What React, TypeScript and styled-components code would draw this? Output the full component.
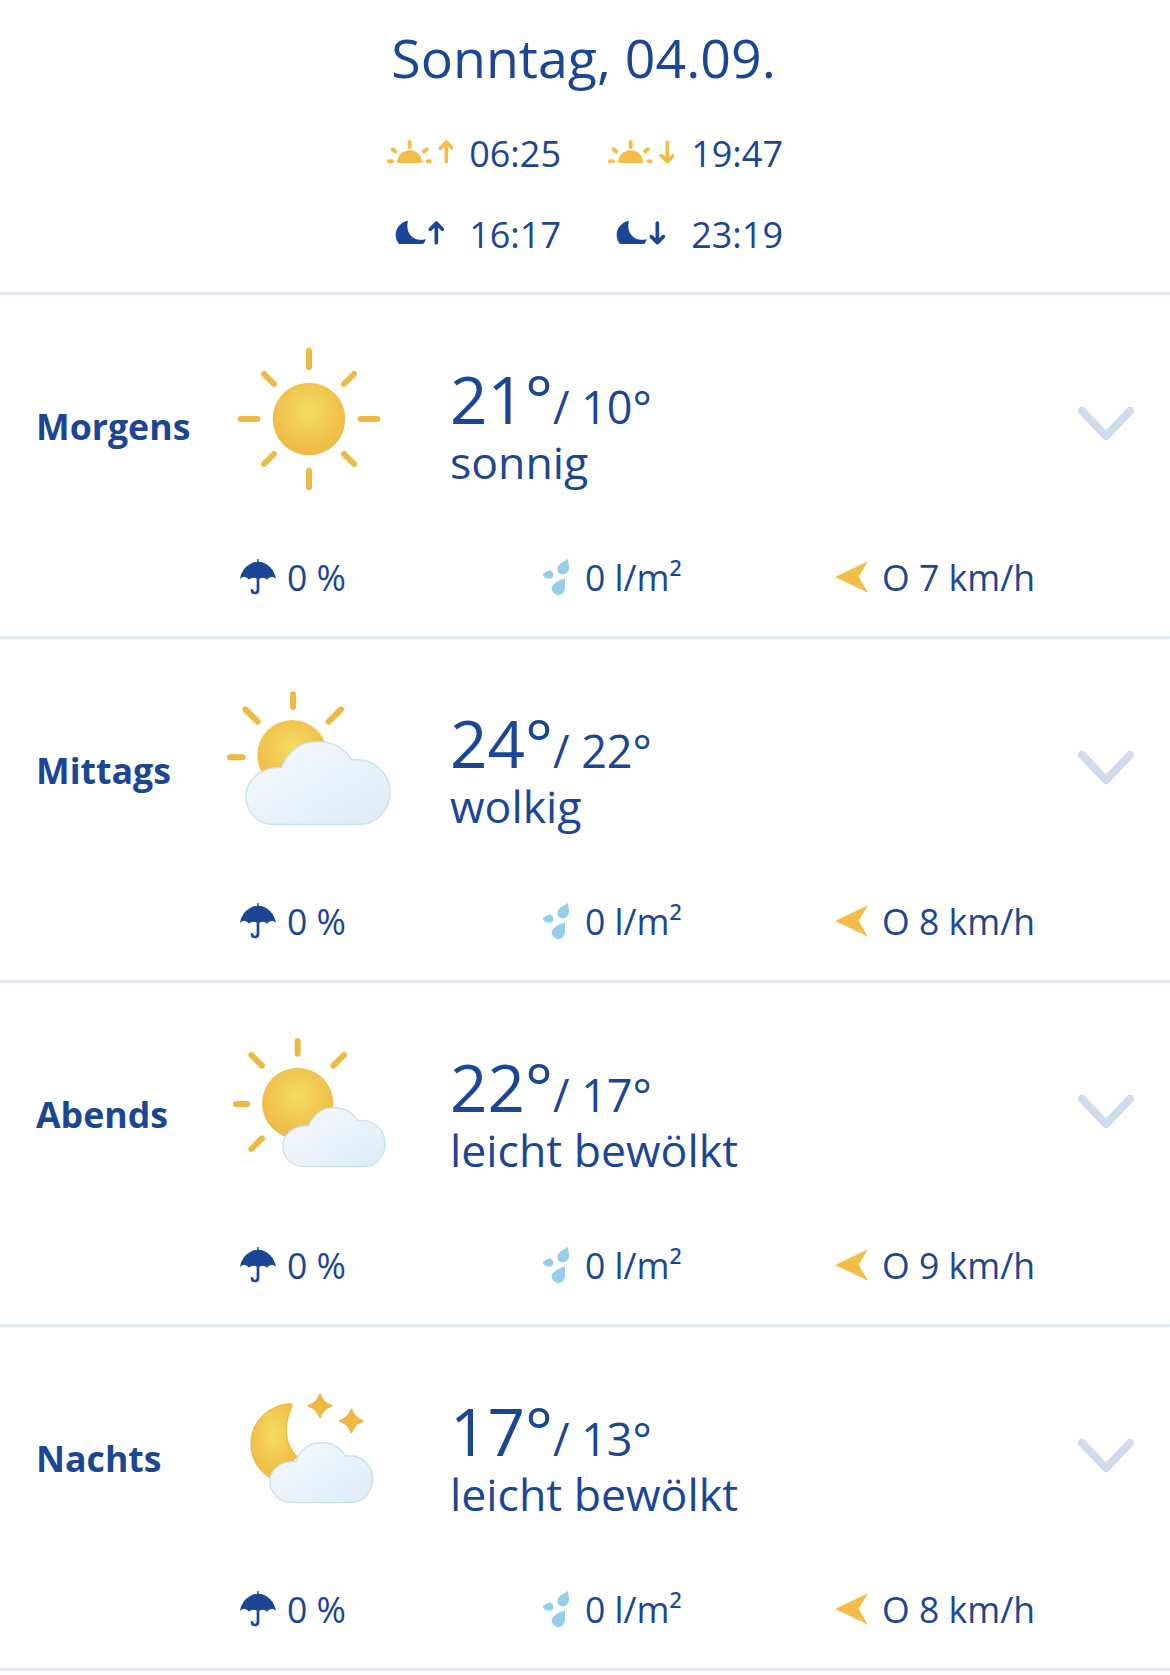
import React from "react";
import styled, { createGlobalStyle } from "styled-components";

const Global = createGlobalStyle`
  html, body { margin: 0; padding: 0; background: #fff; }
  body { font-family: "Open Sans", "Noto Sans", sans-serif; color: #1b4695; }
`;

const Page = styled.div`
  width: 1170px;
  background: #fff;
`;

const Header = styled.header`
  padding-top: 24px;
  display: flex;
  flex-direction: column;
  align-items: center;
  border-bottom: 3px solid #dfe9f6;
  height: 268px;
`;

const Title = styled.h1`
  margin: 0;
  padding-right: 3px;
  font-size: 53.7px;
  font-weight: 400;
  line-height: 68px;
  height: 68px;
`;

const AstroGrid = styled.div`
  display: grid;
  grid-template-columns: 174px 175px;
  column-gap: 47px;
  grid-auto-rows: 81px;
  margin-top: 21px;
`;

const AstroCell = styled.div`
  display: flex;
  align-items: center;
  justify-content: space-between;
  font-size: 36px;
`;

const AstroIcon = styled.svg`
  width: 66px;
  height: 40px;
  display: block;
`;

const Row = styled.section`
  height: 341px;
  border-bottom: 3px solid #dfe9f6;
  display: flex;
  flex-direction: column;
`;

const Main = styled.div`
  display: grid;
  grid-template-columns: 174px 240px 1fr 93px;
  height: 180px;
  padding: 31px 0 0 36px;
`;

const Label = styled.div`
  font-size: 35.7px;
  font-weight: 700;
  line-height: 48px;
  padding-top: 76px;
`;

const WeatherIcon = styled.svg`
  width: 200px;
  height: 180px;
  display: block;
`;

const TempBlock = styled.div`
  padding-top: 38px;
`;

const TempLine = styled.div`
  display: flex;
  align-items: baseline;
  height: 70px;
`;

const High = styled.span`
  font-size: 65.5px;
  line-height: 70px;
`;

const Low = styled.span`
  font-size: 45px;
  line-height: 50px;
`;

const Condition = styled.div`
  font-size: 44.6px;
  line-height: 50px;
  margin-top: 3px;
`;

const Chevron = styled.svg`
  width: 58px;
  height: 35px;
  display: block;
  margin-top: 80px;
`;

const Stats = styled.div`
  display: grid;
  grid-template-columns: 303px 292px auto;
  padding: 47px 0 0 240px;
`;

const Stat = styled.div<{ $gap: number }>`
  display: flex;
  align-items: center;
  gap: ${(p) => p.$gap}px;
  font-size: 35.6px;
  line-height: 48px;
`;

const sunRays = "M68 24V39M6 82H15M122 82H128M17 46L25 52M119 46L111 52";

const AstroGlyph = ({ moon, down }: { moon?: boolean; down?: boolean }) => {
  const color = moon ? "#1b4695" : "#f3bd4a";
  const x = moon ? 148 : 178;
  const arrow = down
    ? `M${x} 24V82M${x - 18} 65L${x} 83L${x + 18} 65`
    : `M${x} 83V24M${x - 18} 43L${x} 24L${x + 18} 43`;
  return (
    <AstroIcon viewBox="0 0 198 120">
      {moon ? (
        <path fill={color} d="M63 17C38 22 26 42 26 60C26 71 30 80 36 87L108 87C112 83 115 78 116 72C90 82 52 62 63 17Z" />
      ) : (
        <>
          <path fill={color} d="M30 87A38 38 0 0 1 106 87Z" />
          <path stroke={color} strokeWidth={12} strokeLinecap="round" fill="none" d={sunRays} />
        </>
      )}
      <path stroke={color} strokeWidth={11} strokeLinecap="round" strokeLinejoin="round" fill="none" d={arrow} />
    </AstroIcon>
  );
};

const Defs = ({ id }: { id: string }) => (
  <defs>
    <radialGradient id={`sun${id}`} cx="50%" cy="40%" r="60%">
      <stop offset="0%" stopColor="#f3dc62" />
      <stop offset="100%" stopColor="#efb945" />
    </radialGradient>
    <linearGradient id={`cloud${id}`} x1="0" y1="0" x2="1" y2="1">
      <stop offset="0%" stopColor="#f6f9fd" />
      <stop offset="100%" stopColor="#ddecf7" />
    </linearGradient>
  </defs>
);

const Rays = ({ d }: { d: string }) => (
  <path d={d} stroke="#efb945" strokeWidth={18} strokeLinecap="round" fill="none" />
);

const CloudPath = ({ id, d }: { id: string; d: string }) => (
  <path d={d} fill={`url(#cloud${id})`} stroke="#c6e0ee" strokeWidth={4} />
);

const SunIcon = () => (
  <WeatherIcon viewBox="0 0 600 540">
    <Defs id="a" />
    <Rays d="M297 74V124M297 434V484M92 279H142M452 279H502M162 144L192 174M432 144L402 174M162 414L192 384M432 414L402 384" />
    <circle cx="297" cy="279" r="109" fill="url(#suna)" />
  </WeatherIcon>
);

const CloudyIcon = () => (
  <WeatherIcon viewBox="0 0 600 540">
    <Defs id="b" />
    <Rays d="M249 73V111M60 262H98M106 118L143 155M393 118L356 155" />
    <circle cx="247" cy="255" r="105" fill="url(#sunb)" />
    <CloudPath id="b" d="M190 463C140 463 108 425 108 378C108 330 150 292 215 292C235 240 275 215 320 215C370 215 405 235 425 270C490 262 540 310 540 365C540 420 500 463 450 463Z" />
  </WeatherIcon>
);

const PartlyIcon = () => (
  <WeatherIcon viewBox="0 0 600 540">
    <Defs id="c" />
    <Rays d="M263 81V119M78 270H112M124 123L156 155M402 123L370 155M156 373L124 405" />
    <circle cx="263" cy="268" r="107" fill="url(#sunc)" />
    <CloudPath id="c" d="M285 458C248 458 218 432 218 397C218 362 250 333 295 336C312 298 340 281 370 281C405 281 430 298 443 320C490 314 525 345 525 390C525 430 495 458 460 458Z" />
  </WeatherIcon>
);

const NightIcon = () => (
  <WeatherIcon viewBox="0 0 600 540">
    <Defs id="d" />
    <path
      fill="url(#sund)"
      stroke="#efb945"
      strokeWidth={4}
      strokeLinejoin="round"
      d="M240 137C185 140 123 185 123 258C123 305 150 345 195 368L260 295C230 265 215 215 245 147C248 141 246 137 240 137Z"
    />
    <path fill="#f0b745" stroke="#f0b745" strokeWidth={6} strokeLinejoin="round" d="M330 110Q338 136 364 144Q338 152 330 178Q322 152 296 144Q322 136 330 110Z" />
    <path fill="#f0b745" stroke="#f0b745" strokeWidth={6} strokeLinejoin="round" d="M424 155Q432 181 458 189Q432 197 424 223Q416 197 390 189Q416 181 424 155Z" />
    <CloudPath id="d" d="M245 433C208 433 180 405 180 370C180 335 212 308 257 311C272 272 300 254 335 254C370 254 393 272 405 294C452 288 488 320 488 363C488 402 460 433 425 433Z" />
  </WeatherIcon>
);

const Umbrella = () => (
  <svg width="36" height="36" viewBox="0 0 108 108">
    <path fill="#1b4695" d="M52 0H56V8C84 10 105 35 108 60C100 52 88 52 81 62C75 54 61 54 54 62C47 54 33 54 27 62C20 52 8 52 0 60C3 35 25 10 52 8Z" />
    <path fill="none" stroke="#1b4695" strokeWidth={8} strokeLinecap="round" d="M54 55V92Q54 102 44 102Q36 102 36 94" />
  </svg>
);

const Drops = () => (
  <svg width="26" height="36" viewBox="0 0 78 108">
    <path fill="#96cfea" d="M75 0C76 10 78 18 78 28C78 38 70 46 60 46C50 46 43 39 43 30C43 16 60 10 75 0Z" />
    <path fill="#96cfea" d="M23 33C25 38 31 42 31 48C31 55 25 60 19 59C12 59 0 56 0 48C0 42 12 36 23 33Z" />
    <path fill="#96cfea" d="M66 57C66 68 66 72 66 86C66 98 57 108 46 108C35 108 26 99 26 88C26 74 48 64 66 57Z" />
  </svg>
);

const Wind = () => (
  <svg width="33" height="32" viewBox="0 0 99 96">
    <path fill="#f3bd4a" d="M0 48L99 1L71 48L99 95Z" />
  </svg>
);

const Down = () => (
  <Chevron viewBox="0 0 58 35">
    <path d="M5 5L29 30L53 5" fill="none" stroke="#cfdcec" strokeWidth={8} strokeLinecap="round" strokeLinejoin="round" />
  </Chevron>
);

const rows = [
  { label: "Morgens", Icon: SunIcon, high: "21°", low: "/ 10°", text: "sonnig", wind: "O 7 km/h" },
  { label: "Mittags", Icon: CloudyIcon, high: "24°", low: "/ 22°", text: "wolkig", wind: "O 8 km/h" },
  { label: "Abends", Icon: PartlyIcon, high: "22°", low: "/ 17°", text: "leicht bewölkt", wind: "O 9 km/h" },
  { label: "Nachts", Icon: NightIcon, high: "17°", low: "/ 13°", text: "leicht bewölkt", wind: "O 8 km/h" },
];

export default function App() {
  return (
    <Page>
      <Global />
      <Header>
        <Title>Sonntag, 04.09.</Title>
        <AstroGrid>
          <AstroCell><AstroGlyph /><span>06:25</span></AstroCell>
          <AstroCell><AstroGlyph down /><span>19:47</span></AstroCell>
          <AstroCell><AstroGlyph moon /><span>16:17</span></AstroCell>
          <AstroCell><AstroGlyph moon down /><span>23:19</span></AstroCell>
        </AstroGrid>
      </Header>
      {rows.map((r) => (
        <Row key={r.label}>
          <Main>
            <Label>{r.label}</Label>
            <r.Icon />
            <TempBlock>
              <TempLine>
                <High>{r.high}</High>
                <Low>{r.low}</Low>
              </TempLine>
              <Condition>{r.text}</Condition>
            </TempBlock>
            <Down />
          </Main>
          <Stats>
            <Stat $gap={11}><Umbrella /><span>0 %</span></Stat>
            <Stat $gap={16}><Drops /><span>0 l/m²</span></Stat>
            <Stat $gap={14}><Wind /><span>{r.wind}</span></Stat>
          </Stats>
        </Row>
      ))}
    </Page>
  );
}
